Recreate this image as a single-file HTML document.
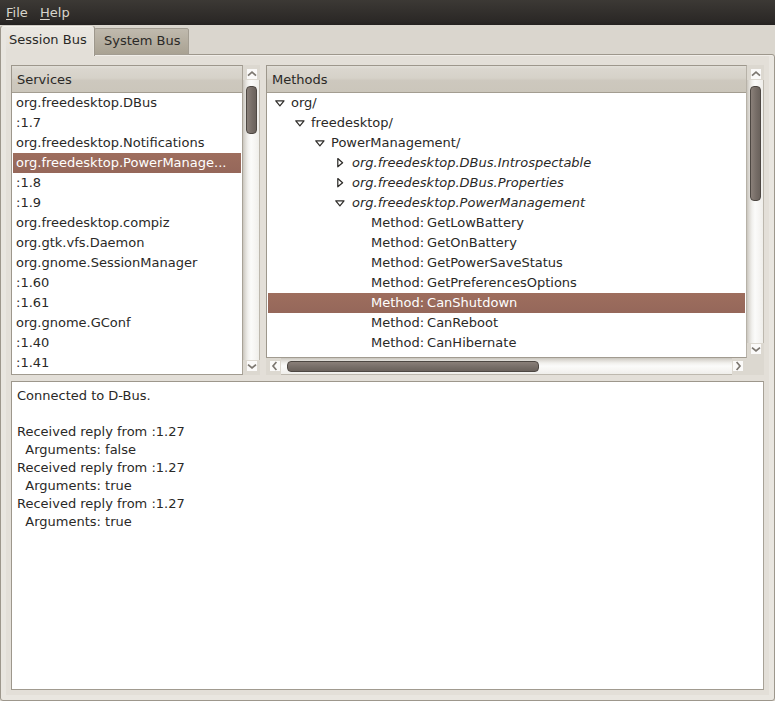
<!DOCTYPE html>
<html><head><meta charset="utf-8"><title>D-Feet</title>
<style>
html,body{margin:0;padding:0;}
body{width:775px;height:701px;overflow:hidden;background:#dad6ce;font-family:"DejaVu Sans","Liberation Sans",sans-serif;font-size:13px;color:#2a2927;position:relative;}
div,span{box-sizing:border-box;}
.a{position:absolute;}
#menubar{left:0;top:0;width:775px;height:25px;background:linear-gradient(#3c3935,#2b2826 85%,#242120);color:#d9d5cc;}
.t{position:absolute;white-space:nowrap;line-height:20px;height:20px;}
.i{font-style:oblique;}
.m{word-spacing:-1.2px;}
.sel{position:absolute;background:linear-gradient(#9e6e5e,#95675a);height:20px;}
.w{color:#fff;}
.hdr{position:absolute;background:linear-gradient(#e2dfd8 0%,#dad6ce 12%,#d6d2c9 46%,#cdc8be 56%,#cbc6bb 100%);border-bottom:1px solid #a39d91;}
.pane{position:absolute;background:#fff;border:1px solid #9d978c;border-right-color:#a8a297;border-bottom-color:#a19b90;}
.vtr{position:absolute;width:16px;background:linear-gradient(90deg,#c9c5bd 0,#dcd9d3 2px,#f1f0ed 5px,#fbfbfa 8px,#f6f5f3 12px,#efeeea 100%);border-right:1px solid #bdb8ae;}
.htr{position:absolute;height:16px;background:linear-gradient(#c9c5bd 0,#dcd9d3 2px,#f1f0ed 5px,#fbfbfa 8px,#f6f5f3 12px,#efeeea 100%);border-bottom:1px solid #bdb8ae;}
.vsl{position:absolute;width:11px;border-radius:4px;border:1px solid #4d4742;background:linear-gradient(90deg,#8a8079,#756c66 60%,#6a625c);}
.hsl{position:absolute;height:11px;border-radius:4px;border:1px solid #4d4742;background:linear-gradient(#8a8079,#756c66 60%,#6a625c);}
.vsz{position:absolute;width:17px;height:15px;background:#dcd8d0;}
.hsz{position:absolute;height:17px;width:15px;background:#dcd8d0;}
.stp{position:absolute;width:10px;height:10px;background:#fbfaf9;}
u{text-underline-offset:2px;text-decoration-thickness:1px;}
svg{position:absolute;overflow:visible;}
</style></head><body>
<div id="menubar" class="a"><span class="t" style="left:6px;top:3px"><u>F</u>ile</span><span class="t" style="left:40px;top:3px"><u>H</u>elp</span></div>
<div class="a" style="left:0;top:54px;width:775px;height:647px;border:1px solid #9d978c;border-radius:0 3px 3px 3px;background:#e3dfd8;box-shadow:inset 0 1px 0 #f1eee9, inset 5px 0 0 #e9e6e0, inset -5px 0 0 #e9e6e0, inset 0 -5px 0 #e9e6e0"></div>
<div class="a" style="left:94px;top:28px;width:95px;height:27px;border:1px solid #a39d92;border-radius:2px 2px 0 0;background:linear-gradient(#c0baae,#b5aea0 50%,#a9a293)"></div>
<span class="t" style="left:104px;top:31px">System Bus</span>
<div class="a" style="left:0;top:25px;width:95px;height:31px;border:1px solid #9d978c;border-top-color:#cfcbc3;border-bottom:none;border-radius:4px 4px 0 0;background:linear-gradient(#ebe8e2,#e3dfd8 80%);box-shadow:inset 0 1px 0 #f3f1ec, inset 5px 0 0 #e9e6e0, inset -1px 0 0 #eae7e1"></div>
<span class="t" style="left:9px;top:30px">Session Bus</span>
<div class="pane" style="left:11px;top:65px;width:232px;height:310px"></div>
<div class="hdr" style="left:12px;top:66px;width:230px;height:27px"></div>
<span class="t" style="left:17px;top:70px">Services</span>
<span class="t" style="left:16px;top:93px">org.freedesktop.DBus</span>
<span class="t" style="left:16px;top:113px">:1.7</span>
<span class="t" style="left:16px;top:133px">org.freedesktop.Notifications</span>
<div class="sel" style="left:13px;top:153px;width:228px"></div>
<span class="t w" style="left:16px;top:153px">org.freedesktop.PowerManage...</span>
<span class="t" style="left:16px;top:173px">:1.8</span>
<span class="t" style="left:16px;top:193px">:1.9</span>
<span class="t" style="left:16px;top:213px">org.freedesktop.compiz</span>
<span class="t" style="left:16px;top:233px">org.gtk.vfs.Daemon</span>
<span class="t" style="left:16px;top:253px">org.gnome.SessionManager</span>
<span class="t" style="left:16px;top:273px">:1.60</span>
<span class="t" style="left:16px;top:293px">:1.61</span>
<span class="t" style="left:16px;top:313px">org.gnome.GConf</span>
<span class="t" style="left:16px;top:333px">:1.40</span>
<span class="t" style="left:16px;top:353px">:1.41</span>
<div class="vtr" style="left:243px;top:65px;height:310px;width:17px"></div>
<div class="vsz" style="left:243px;top:65px"></div>
<div class="vsz" style="left:243px;top:360px"></div>
<div class="stp" style="left:247px;top:69px"></div>
<svg style="left:247px;top:69px" width="10" height="10" viewBox="0 0 10 10"><path d="M1 6.6 L5 3.2 L9 6.6" fill="none" stroke="#7c7770" stroke-width="1.7"/></svg>
<div class="stp" style="left:247px;top:361px"></div>
<svg style="left:247px;top:361px" width="10" height="10" viewBox="0 0 10 10"><path d="M1 3.6 L5 7 L9 3.6" fill="none" stroke="#7c7770" stroke-width="1.7"/></svg>
<div class="vsl" style="left:246px;top:86px;height:48px"></div>
<div class="pane" style="left:266px;top:65px;width:481px;height:293px;border-right-color:#b7b2a8"></div>
<div class="hdr" style="left:267px;top:66px;width:479px;height:27px"></div>
<span class="t" style="left:272px;top:70px">Methods</span>
<svg style="left:275px;top:100px" width="10" height="7" viewBox="0 0 10 7"><path d="M0.8 0.8 L9 0.8 L4.9 5.8 Z" fill="#fff" stroke="#2f2d2a" stroke-width="1.25" stroke-linejoin="round"/></svg>
<span class="t" style="left:291px;top:93px">org/</span>
<svg style="left:295px;top:120px" width="10" height="7" viewBox="0 0 10 7"><path d="M0.8 0.8 L9 0.8 L4.9 5.8 Z" fill="#fff" stroke="#2f2d2a" stroke-width="1.25" stroke-linejoin="round"/></svg>
<span class="t" style="left:311px;top:113px">freedesktop/</span>
<svg style="left:315px;top:140px" width="10" height="7" viewBox="0 0 10 7"><path d="M0.8 0.8 L9 0.8 L4.9 5.8 Z" fill="#fff" stroke="#2f2d2a" stroke-width="1.25" stroke-linejoin="round"/></svg>
<span class="t" style="left:331px;top:133px">PowerManagement/</span>
<svg style="left:337px;top:158px" width="7" height="10" viewBox="0 0 7 10"><path d="M0.8 0.6 L0.8 8.8 L5.6 4.7 Z" fill="#fff" stroke="#2f2d2a" stroke-width="1.25" stroke-linejoin="round"/></svg>
<span class="t i" style="left:352px;top:153px">org.freedesktop.DBus.Introspectable</span>
<svg style="left:337px;top:178px" width="7" height="10" viewBox="0 0 7 10"><path d="M0.8 0.6 L0.8 8.8 L5.6 4.7 Z" fill="#fff" stroke="#2f2d2a" stroke-width="1.25" stroke-linejoin="round"/></svg>
<span class="t i" style="left:352px;top:173px">org.freedesktop.DBus.Properties</span>
<svg style="left:335px;top:200px" width="10" height="7" viewBox="0 0 10 7"><path d="M0.8 0.8 L9 0.8 L4.9 5.8 Z" fill="#fff" stroke="#2f2d2a" stroke-width="1.25" stroke-linejoin="round"/></svg>
<span class="t i" style="left:352px;top:193px">org.freedesktop.PowerManagement</span>
<span class="t m" style="left:371px;top:213px">Method: GetLowBattery</span>
<span class="t m" style="left:371px;top:233px">Method: GetOnBattery</span>
<span class="t m" style="left:371px;top:253px">Method: GetPowerSaveStatus</span>
<span class="t m" style="left:371px;top:273px">Method: GetPreferencesOptions</span>
<div class="sel" style="left:268px;top:293px;width:477px"></div>
<span class="t m w" style="left:371px;top:293px">Method: CanShutdown</span>
<span class="t m" style="left:371px;top:313px">Method: CanReboot</span>
<span class="t m" style="left:371px;top:333px">Method: CanHibernate</span>
<div class="a" style="left:267px;top:353px;width:479px;height:4px;background:#fff"></div>
<div class="vtr" style="left:747px;top:65px;height:293px;width:17px"></div>
<div class="vsz" style="left:747px;top:65px"></div>
<div class="vsz" style="left:747px;top:343px"></div>
<div class="stp" style="left:751px;top:69px"></div>
<svg style="left:751px;top:69px" width="10" height="10" viewBox="0 0 10 10"><path d="M1 6.6 L5 3.2 L9 6.6" fill="none" stroke="#7c7770" stroke-width="1.7"/></svg>
<div class="stp" style="left:751px;top:344px"></div>
<svg style="left:751px;top:344px" width="10" height="10" viewBox="0 0 10 10"><path d="M1 3.6 L5 7 L9 3.6" fill="none" stroke="#7c7770" stroke-width="1.7"/></svg>
<div class="vsl" style="left:750px;top:86px;height:115px"></div>
<div class="htr" style="left:266px;top:358px;width:481px;height:17px"></div>
<div class="hsz" style="left:266px;top:358px"></div>
<div class="hsz" style="left:732px;top:358px"></div>
<div class="stp" style="left:270px;top:361px"></div>
<svg style="left:270px;top:361px" width="10" height="10" viewBox="0 0 10 10"><path d="M6.4 1 L3 5 L6.4 9" fill="none" stroke="#7c7770" stroke-width="1.7"/></svg>
<div class="stp" style="left:733px;top:361px"></div>
<svg style="left:733px;top:361px" width="10" height="10" viewBox="0 0 10 10"><path d="M3.6 1 L7 5 L3.6 9" fill="none" stroke="#7c7770" stroke-width="1.7"/></svg>
<div class="hsl" style="left:287px;top:361px;width:252px"></div>
<div class="a" style="left:747px;top:358px;width:17px;height:17px;background:#dcd8d0"></div>
<div class="pane" style="left:11px;top:381px;width:753px;height:309px"></div>
<span class="t" style="left:17px;top:387px;line-height:18px;height:18px">Connected to D-Bus.</span>
<span class="t" style="left:17px;top:423px;line-height:18px;height:18px">Received reply from :1.27</span>
<span class="t" style="left:17px;top:441px;line-height:18px;height:18px">  Arguments: false</span>
<span class="t" style="left:17px;top:459px;line-height:18px;height:18px">Received reply from :1.27</span>
<span class="t" style="left:17px;top:477px;line-height:18px;height:18px">  Arguments: true</span>
<span class="t" style="left:17px;top:495px;line-height:18px;height:18px">Received reply from :1.27</span>
<span class="t" style="left:17px;top:513px;line-height:18px;height:18px">  Arguments: true</span>
</body></html>
